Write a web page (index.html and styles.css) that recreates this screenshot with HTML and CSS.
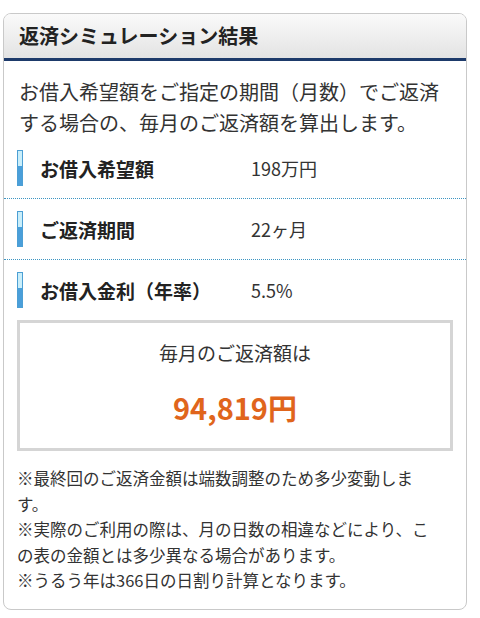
FILE: index.html
```html
<!DOCTYPE html>
<html lang="ja">
<head>
<meta charset="utf-8">
<title>返済シミュレーション結果</title>
<link rel="stylesheet" href="styles.css">
</head>
<body>
<div class="card">
  <div class="header">返済シミュレーション結果</div>
  <p class="intro">お借入希望額をご指定の期間（月数）でご返済する場合の、毎月のご返済額を算出します。</p>
  <div class="rows">
    <div class="row">
      <span class="bar"></span>
      <span class="label">お借入希望額</span>
      <span class="value">198万円</span>
    </div>
    <div class="row">
      <span class="bar"></span>
      <span class="label">ご返済期間</span>
      <span class="value">22ヶ月</span>
    </div>
    <div class="row row-last">
      <span class="bar"></span>
      <span class="label">お借入金利（年率）</span>
      <span class="value">5.5%</span>
    </div>
  </div>
  <div class="result">
    <div class="result-title">毎月のご返済額は</div>
    <div class="result-amount">94,819円</div>
  </div>
  <div class="notes">
    <p>※最終回のご返済金額は端数調整のため多少変動します。</p>
    <p>※実際のご利用の際は、月の日数の相違などにより、この表の金額とは多少異なる場合があります。</p>
    <p>※うるう年は366日の日割り計算となります。</p>
  </div>
</div>
</body>
</html>
```
FILE: styles.css
```css
html, body {
  margin: 0;
  padding: 0;
  background: #ffffff;
}
body {
  font-family: "Noto Sans CJK JP", "Noto Sans", sans-serif;
  color: #333333;
}
.card {
  margin: 13px 0 9px 3px;
  width: 462px;
  border: 1px solid #c9c9c9;
  border-radius: 8px;
  overflow: hidden;
  background: #ffffff;
}
.header {
  height: 44px;
  line-height: 44px;
  padding-left: 15px;
  font-size: 20px;
  font-weight: bold;
  color: #222222;
  background: linear-gradient(#fafafa, #e3e3e3);
  border-bottom: 3px solid #1d3a6a;
}
.intro {
  margin: 0;
  padding: 15px 17px 0 15px;
  font-size: 20px;
  line-height: 31px;
}
.row {
  display: flex;
  align-items: center;
  height: 60px;
  border-bottom: 1px dotted #3d95c2;
}
.row-last {
  height: 60px;
  border-bottom: none;
}
.bar {
  width: 4px;
  height: 34px;
  margin-left: 13px;
  border: 1px solid #4c9fd4;
  background: linear-gradient(#c9eefa 0, #c9eefa 45%, #4a9fda 45%, #4a9fda 100%);
  flex: none;
}
.label {
  width: 211px;
  margin-left: 17px;
  font-size: 19px;
  font-weight: bold;
  color: #222222;
  flex: none;
}
.value {
  font-size: 18px;
  color: #333333;
}
.result {
  margin: 0 0 0 13px;
  width: 430px;
  border: 3px solid #d5d5d5;
  text-align: center;
  padding: 15px 0 21px;
}
.result-title {
  font-size: 19px;
  line-height: 30px;
  color: #333333;
}
.result-amount {
  margin-top: 19px;
  font-size: 29px;
  line-height: 40px;
  font-weight: bold;
  color: #e0651c;
}
.notes {
  padding: 15px 31px 15px 13px;
}
.notes p {
  margin: 0;
  font-size: 16.5px;
  line-height: 25.6px;
  color: #333333;
}
```
